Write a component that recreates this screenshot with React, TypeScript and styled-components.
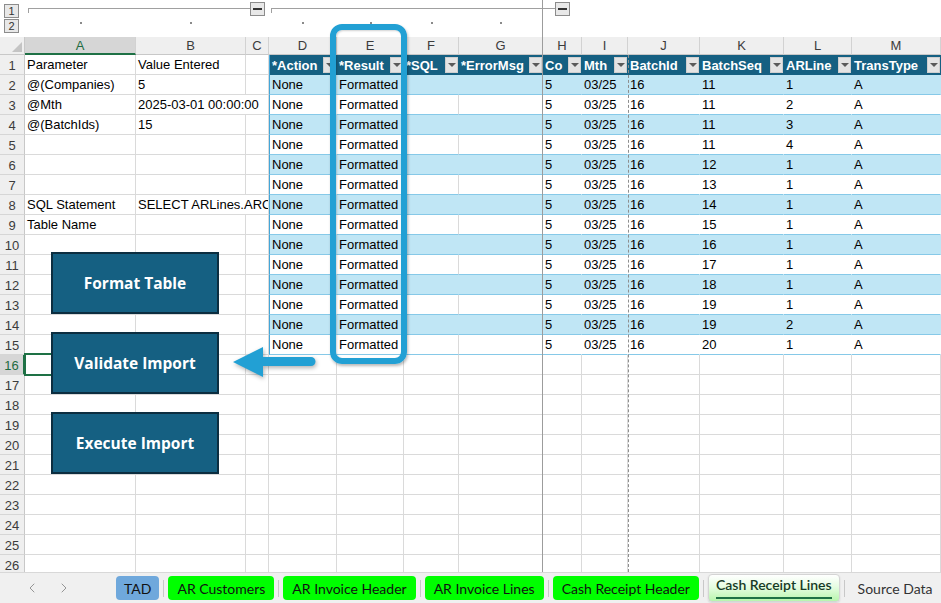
import React from "react";
import styled, { createGlobalStyle, css } from "styled-components";
import { ChevronLeft, ChevronRight } from "lucide-react";

// Column widths: row header, then A..M
const COLS = [25, 111, 110, 23, 68, 67, 55, 84, 39, 46, 72, 84, 68, 89];
const TEMPLATE = COLS.map((w) => `${w}px`).join(" ");
const LETTERS = ["A", "B", "C", "D", "E", "F", "G", "H", "I", "J", "K", "L", "M"];

const GlobalStyle = createGlobalStyle`
  html, body { margin: 0; padding: 0; background: #fff; overflow: hidden; }
  * { box-sizing: border-box; }
`;

const Frame = styled.div`
  position: relative;
  width: 941px;
  height: 603px;
  overflow: hidden;
  display: flex;
  flex-direction: column;
  font-family: "Liberation Sans", Arial, sans-serif;
  background: #fff;
`;

// ---------- outline (grouping) bar ----------
const OutlineBar = styled.div`
  flex: none;
  height: 37px;
  display: grid;
  grid-template-columns: ${TEMPLATE};
  grid-template-rows: 17px 20px;
`;

const LevelStack = styled.div`
  grid-row: 1 / 3;
  grid-column: 1;
  display: flex;
  flex-direction: column;
  gap: 1px;
  padding: 4px 0 0 4px;
`;

const LevelBtn = styled.div`
  width: 15px;
  height: 14px;
  border: 1px solid #8c8c8c;
  background: #e8e8e8;
  color: #333;
  font-size: 11px;
  display: flex;
  align-items: center;
  justify-content: center;
`;

const Bracket = styled.div<{ $from: number; $to: number; $pad: number; $end: number }>`
  grid-row: 1;
  grid-column: ${(p) => p.$from} / ${(p) => p.$to};
  display: flex;
  align-items: flex-start;
  padding: 2px ${(p) => p.$end}px 0 ${(p) => p.$pad}px;
`;

const BracketLine = styled.div`
  flex: 1;
  height: 5px;
  margin-top: 6px;
  border-top: 1px solid #a0a0a0;
  border-left: 1px solid #a0a0a0;
`;

const MinusBtn = styled.div`
  width: 15px;
  height: 14px;
  border: 1px solid #8c8c8c;
  background: #e8e8e8;
  display: flex;
  align-items: center;
  justify-content: center;
  &::after {
    content: "";
    width: 9px;
    height: 2px;
    background: #333;
  }
`;

const Dot = styled.div<{ $col: number }>`
  grid-row: 2;
  grid-column: ${(p) => p.$col};
  justify-self: center;
  width: 2px;
  height: 2px;
  margin-top: 5px;
  background: #8a8a8a;
`;

// ---------- sheet grid ----------
const Sheet = styled.div`
  flex: none;
  height: 535px;
  overflow: hidden;
  display: grid;
  grid-template-columns: ${TEMPLATE};
  grid-template-rows: 18px;
  grid-auto-rows: 20px;
`;

const Corner = styled.div`
  position: relative;
  background: #efefef;
  border-right: 1px solid #c8c8c8;
  border-bottom: 1px solid #c8c8c8;
  &::after {
    content: "";
    position: absolute;
    right: 2px;
    bottom: 2px;
    border-left: 10px solid transparent;
    border-bottom: 10px solid #c4c4c4;
  }
`;

const ColHead = styled.div<{ $active?: boolean }>`
  background: ${(p) => (p.$active ? "#d6d6d6" : "#efefef")};
  color: ${(p) => (p.$active ? "#1e6b41" : "#3c3c3c")};
  border-right: 1px solid #d2d2d2;
  border-bottom: ${(p) => (p.$active ? "2px solid #1e7145" : "1px solid #c8c8c8")};
  font-size: 13px;
  line-height: 18px;
  text-align: center;
`;

const RowHead = styled.div<{ $active?: boolean }>`
  background: ${(p) => (p.$active ? "#d6d6d6" : "#efefef")};
  color: ${(p) => (p.$active ? "#1e6b41" : "#3c3c3c")};
  border-right: ${(p) => (p.$active ? "2px solid #1e7145" : "1px solid #c8c8c8")};
  border-bottom: 1px solid #d6d6d6;
  font-size: 13px;
  padding-top: 1px;
  line-height: 19px;
  text-align: center;
`;

type Tone = "plain" | "band" | "white";

const Cell = styled.div<{ $tone?: Tone; $span?: number; $edge?: boolean; $grid?: boolean }>`
  height: 20px;
  padding: 1px 2px 0;
  border-right: 1px solid #dadada;
  border-bottom: 1px solid #dadada;
  font-size: 13px;
  line-height: 18px;
  color: #000;
  white-space: nowrap;
  overflow: hidden;
  ${(p) => p.$span && css`grid-column: span ${p.$span};`}
  ${(p) =>
    p.$tone === "band" &&
    css`
      background: #c0e6f5;
      border-right-color: #c0e6f5;
      border-bottom-color: #86c9e8;
    `}
  ${(p) =>
    p.$tone === "white" &&
    css`
      background: #fff;
      border-right-color: ${p.$grid ? "#dadada" : "#fff"};
      border-bottom-color: #86c9e8;
    `}
  ${(p) => p.$edge && css`border-left: 1px solid #44a6d8;`}
`;

const HeadCell = styled.div<{ $edge?: boolean }>`
  height: 20px;
  padding: 0 1px 0 2px;
  display: flex;
  align-items: center;
  justify-content: space-between;
  background: #156082;
  color: #fff;
  font-size: 13px;
  font-weight: 700;
  white-space: nowrap;
  overflow: hidden;
  ${(p) => p.$edge && css`border-left: 1px solid #44a6d8;`}
`;

const FilterBtn = styled.span`
  flex: none;
  width: 13px;
  height: 16px;
  background: #e4e4e4;
  border: 1px solid #cfcfcf;
  display: flex;
  align-items: center;
  justify-content: center;
  &::after {
    content: "";
    border-left: 4px solid transparent;
    border-right: 4px solid transparent;
    border-top: 4px solid #5a5a5a;
  }
`;

// ---------- sheet tabs ----------
const TabBar = styled.div`
  flex: 1;
  display: flex;
  align-items: center;
  background: #f0f0f0;
  border-top: 1px solid #d8d8d8;
`;

const Nav = styled.div`
  flex: none;
  width: 116px;
  display: flex;
  gap: 16px;
  padding-left: 24px;
  color: #959595;
`;

type TabTone = "blue" | "green" | "active" | "plain";

const Tab = styled.div<{ $tone: TabTone }>`
  flex: none;
  height: 24px;
  padding: 0 9px;
  border-radius: 4px;
  display: flex;
  align-items: center;
  font-family: Lato, "Open Sans", sans-serif;
  font-size: 14px;
  color: #111;
  white-space: nowrap;
  ${(p) => p.$tone === "blue" && css`background: #6fa8dc; padding: 0 8px;`}
  ${(p) => p.$tone === "green" && css`background: #00ff00;`}
  ${(p) => p.$tone === "plain" && css`color: #333;`}
  ${(p) =>
    p.$tone === "active" &&
    css`
      align-self: flex-start;
      height: 28px;
      margin-top: 1px;
      padding: 0 7px;
      align-items: flex-start;
      background: linear-gradient(#ffffff 0%, #e6fde2 45%, #b8f5ad 100%);
      border: 1px solid #d4d4d4;
      box-shadow: 0 1px 2px rgba(0, 0, 0, 0.12);
      font-weight: 600;
      color: #173a26;
    `}
`;

const ActiveLabel = styled.span`
  margin-top: 1px;
  padding-bottom: 3px;
  border-bottom: 2px solid #1e7145;
  line-height: 18px;
`;

const TabSep = styled.div`
  flex: none;
  width: 1px;
  height: 17px;
  margin: 0 4px;
  background: #c8c8c8;
`;

// ---------- floating objects over the sheet ----------
const FreezeLine = styled.div`
  position: absolute;
  left: 542px;
  top: 0;
  width: 1px;
  height: 572px;
  background: #9c9c9c;
`;

const PageBreak = styled.div`
  position: absolute;
  left: 628px;
  top: 55px;
  height: 517px;
  border-left: 1px dashed #8e8e8e;
`;

const Selection = styled.div`
  position: absolute;
  left: 24px;
  top: 353px;
  width: 114px;
  height: 23px;
  border: 2px solid #1e7145;
`;

const Highlight = styled.div`
  position: absolute;
  left: 330px;
  top: 24px;
  width: 77px;
  height: 340px;
  border: 6px solid #22a0d4;
  border-radius: 12px;
  box-shadow: 1px 2px 3px rgba(0, 0, 0, 0.28), inset 1px 1px 2px rgba(0, 0, 0, 0.18);
`;

const ArrowSvg = styled.svg`
  position: absolute;
  left: 229px;
  top: 344px;
  filter: drop-shadow(1px 2px 2px rgba(0, 0, 0, 0.3));
`;

const ShapeStack = styled.div`
  position: absolute;
  left: 51px;
  top: 252px;
  display: flex;
  flex-direction: column;
  gap: 18px;
`;

const ShapeButton = styled.div`
  width: 168px;
  height: 62px;
  background: #156082;
  border: 2px solid #0c2e40;
  color: #fff;
  display: flex;
  align-items: center;
  justify-content: center;
  font-family: "Open Sans", "Noto Sans", sans-serif;
  font-size: 15.5px;
  font-weight: 700;
`;

// ---------- data ----------
const PARAMS: Record<number, [string, string]> = {
  1: ["Parameter", "Value Entered"],
  2: ["@(Companies)", "5"],
  3: ["@Mth", "2025-03-01 00:00:00"],
  4: ["@(BatchIds)", "15"],
  8: ["SQL Statement", "SELECT ARLines.ARC"],
  9: ["Table Name", ""],
};
// rows whose B value runs on into the empty C column
const SPILL = [3, 8];

const HEADERS = ["*Action", "*Result", "*SQL", "*ErrorMsg", "Co", "Mth", "BatchId", "BatchSeq", "ARLine", "TransType"];
const SEQ = [11, 11, 11, 11, 12, 13, 14, 15, 16, 17, 18, 19, 19, 20];
const LINE = [1, 2, 3, 4, 1, 1, 1, 1, 1, 1, 1, 1, 2, 1];

const TABS: { name: string; tone: TabTone }[] = [
  { name: "TAD", tone: "blue" },
  { name: "AR Customers", tone: "green" },
  { name: "AR Invoice Header", tone: "green" },
  { name: "AR Invoice Lines", tone: "green" },
  { name: "Cash Receipt Header", tone: "green" },
  { name: "Cash Receipt Lines", tone: "active" },
  { name: "Source Data", tone: "plain" },
];

function renderRow(r: number) {
  const cells: React.ReactNode[] = [];
  const p = PARAMS[r];
  cells.push(
    <RowHead key="h" $active={r === 16}>
      {r}
    </RowHead>
  );
  cells.push(<Cell key="A">{p ? p[0] : ""}</Cell>);
  if (SPILL.includes(r)) {
    cells.push(
      <Cell key="B" $span={2}>
        {p[1]}
      </Cell>
    );
  } else {
    cells.push(<Cell key="B">{p ? p[1] : ""}</Cell>);
    cells.push(<Cell key="C" />);
  }

  if (r === 1) {
    HEADERS.forEach((h, i) =>
      cells.push(
        <HeadCell key={h} $edge={i === 0}>
          <span>{h}</span>
          <FilterBtn />
        </HeadCell>
      )
    );
  } else if (r <= 15) {
    const i = r - 2;
    const tone: Tone = r % 2 === 0 ? "band" : "white";
    const vals = ["None", "Formatted", "", "", "5", "03/25", "16", String(SEQ[i]), String(LINE[i]), "A"];
    vals.forEach((v, c) =>
      cells.push(
        <Cell key={c} $tone={tone} $edge={c === 0} $grid={c === 2}>
          {v}
        </Cell>
      )
    );
  } else {
    for (let c = 0; c < 10; c++) cells.push(<Cell key={c} />);
  }
  return <React.Fragment key={r}>{cells}</React.Fragment>;
}

export default function App() {
  const rows = Array.from({ length: 26 }, (_, i) => i + 1);
  return (
    <>
      <GlobalStyle />
      <Frame>
        <OutlineBar>
          <LevelStack>
            <LevelBtn>1</LevelBtn>
            <LevelBtn>2</LevelBtn>
          </LevelStack>
          <Bracket $from={2} $to={5} $pad={3} $end={4}>
            <BracketLine />
            <MinusBtn />
          </Bracket>
          <Bracket $from={5} $to={10} $pad={2} $end={12}>
            <BracketLine />
            <MinusBtn />
          </Bracket>
          {[2, 3, 5, 6, 7, 8].map((c) => (
            <Dot key={c} $col={c} />
          ))}
        </OutlineBar>

        <Sheet>
          <Corner />
          {LETTERS.map((l) => (
            <ColHead key={l} $active={l === "A"}>
              {l}
            </ColHead>
          ))}
          {rows.map(renderRow)}
        </Sheet>

        <TabBar>
          <Nav>
            <ChevronLeft size={16} strokeWidth={1.5} />
            <ChevronRight size={16} strokeWidth={1.5} />
          </Nav>
          {TABS.map((t, i) => (
            <React.Fragment key={t.name}>
              {i > 0 && <TabSep />}
              <Tab $tone={t.tone}>
                {t.tone === "active" ? <ActiveLabel>{t.name}</ActiveLabel> : t.name}
              </Tab>
            </React.Fragment>
          ))}
        </TabBar>

        <FreezeLine />
        <PageBreak />
        <Selection />
        <Highlight />
        <ArrowSvg width="92" height="40" viewBox="0 0 92 40">
          <path d="M4 18 L34 3 L34 13 L82 13 A4.5 4.5 0 0 1 82 22 L34 22 L34 33 Z" fill="#22a0d4" />
        </ArrowSvg>
        <ShapeStack>
          <ShapeButton>Format Table</ShapeButton>
          <ShapeButton>Validate Import</ShapeButton>
          <ShapeButton>Execute Import</ShapeButton>
        </ShapeStack>
      </Frame>
    </>
  );
}
